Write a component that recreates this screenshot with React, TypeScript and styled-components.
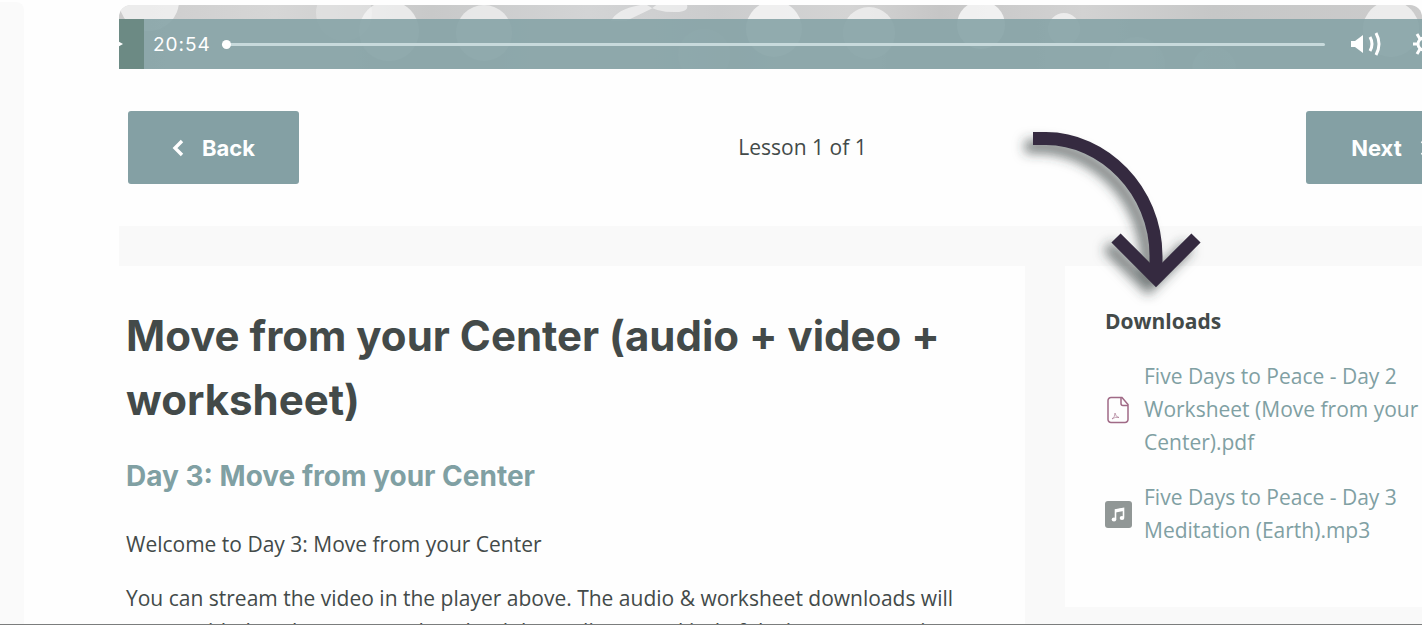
import React from 'react';
import styled, { createGlobalStyle } from 'styled-components';

const Global = createGlobalStyle`
  *, *::before, *::after { box-sizing: border-box; }
  html, body, #root { height: 100%; }
  body {
    margin: 0;
    overflow: hidden;
    background: #fefefe;
    color: #434a49;
    font-family: "Open Sans", "Noto Sans", sans-serif;
    font-size: 21px;
    line-height: 33px;
  }
  h1, h2, h3, p, ul { margin: 0; padding: 0; }
`;

const Page = styled.div`
  position: relative;
  display: flex;
  height: 100%;
  overflow: hidden;
  border-bottom: 1px solid #7b7d7d;
`;

const SideStrip = styled.aside`
  flex: 0 0 24px;
  margin: 2px 95px 0 0;
  background: #fafafa;
  border-top-right-radius: 8px;
`;

const Frame = styled.main`
  flex: 1;
  min-width: 0;
  padding-top: 5px;
`;

const Player = styled.section`
  position: relative;
  height: 64px;
  overflow: hidden;
  border-radius: 12px 12px 0 0;
`;

const Bokeh = styled.svg`
  position: absolute;
  inset: 0;
  width: 100%;
  height: 100%;
`;

const Controls = styled.div`
  position: relative;
  display: flex;
  align-items: center;
  height: 50px;
  margin: 14px -18px 0 -25px;
  background: rgba(134, 163, 166, 0.9);
  color: #fff;
`;

const PlayerButton = styled.button<{ $dark?: boolean }>`
  display: flex;
  align-items: center;
  justify-content: center;
  width: ${p => (p.$dark ? 50 : 32)}px;
  height: 100%;
  padding: 0;
  border: 0;
  background: ${p => (p.$dark ? '#6c8a84' : 'transparent')};
  color: inherit;
`;

const PlayerTools = styled.div`
  display: flex;
  gap: 26px;
  height: 100%;
`;

const Time = styled.time`
  width: 74px;
  padding-left: 9px;
  font-family: Inter, sans-serif;
  font-size: 19px;
  letter-spacing: 1px;
`;

const Seek = styled.input`
  flex: 1;
  min-width: 0;
  height: 20px;
  margin: 0 25px 0 4px;
  appearance: none;
  background: transparent;
  &::-webkit-slider-runnable-track {
    height: 3px;
    border-radius: 2px;
    background: #c8dadc;
  }
  &::-webkit-slider-thumb {
    appearance: none;
    width: 9px;
    height: 9px;
    margin-top: -3px;
    border-radius: 50%;
    background: #fff;
  }
`;

const Pager = styled.nav`
  display: flex;
  align-items: center;
  justify-content: space-between;
  margin-right: -64px;
  padding: 42px 9px;
`;

const PagerButton = styled.button`
  display: flex;
  align-items: center;
  justify-content: center;
  gap: 18px;
  width: 171px;
  height: 73px;
  padding: 0;
  border: 0;
  border-radius: 3px;
  background: #84a0a4;
  color: #fff;
  font: 700 22px/32px Inter, sans-serif;
`;

const Content = styled.div`
  display: flex;
  align-items: flex-start;
  gap: 40px;
  margin-right: -64px;
  padding-top: 40px;
  background: #f9f9f9;
`;

const Lesson = styled.article`
  flex: 1;
  min-width: 0;
  padding: 38px 60px 60px 7px;
  background: #fefefe;
`;

const Title = styled.h1`
  font: 700 42px/64px Inter, sans-serif;
`;

const Subtitle = styled.h2`
  margin-top: 24px;
  color: #80a0a3;
  font: 700 28px/40px Inter, sans-serif;
`;

const Paragraph = styled.p<{ $first?: boolean }>`
  margin-top: ${p => (p.$first ? 32 : 21)}px;
`;

const Downloads = styled.aside`
  flex: 0 0 421px;
  padding: 39px 60px 60px 40px;
  background: #fefefe;
`;

const DownloadsTitle = styled.h3`
  font: 700 21px/33px "Open Sans", sans-serif;
`;

const FileList = styled.ul`
  list-style: none;
`;

const FileItem = styled.li`
  margin-top: 22px;
`;

const FileLink = styled.a`
  display: flex;
  align-items: center;
  gap: 12px;
  color: #80a0a3;
  text-decoration: none;
  white-space: nowrap;
  svg { flex: none; }
`;

const ArrowMark = styled.svg`
  position: absolute;
  top: 110px;
  left: 1000px;
  pointer-events: none;
`;

const bubbles = [
  [30, -4, 30, 0.7], [225, 8, 28, 0.35], [270, 26, 30, 0.65], [365, 28, 28, 0.6], [585, 50, 26, 0.25],
  [655, 24, 28, 0.75], [750, 28, 26, 0.6], [862, 20, 24, 0.8], [945, 24, 16, 0.65],
  [1018, 60, 28, 0.3], [1095, 64, 22, 0.35], [1272, 24, 28, 0.7],
];

const Chevron = ({ back }: { back?: boolean }) => (
  <svg width="12" height="18" viewBox="0 0 12 18" fill="none" stroke="currentColor" strokeWidth="3.4" aria-hidden="true">
    <path d={back ? 'M10 2 3 9l7 7' : 'M2 2l7 7-7 7'} />
  </svg>
);

export default function App() {
  return (
    <>
      <Global />
      <Page>
        <SideStrip />
        <Frame>
          <Player aria-label="Lesson player">
            <Bokeh viewBox="0 0 1303 64" preserveAspectRatio="xMidYMid slice" aria-hidden="true">
              <defs>
                <linearGradient id="haze">
                  <stop offset="0" stopColor="#cccccc" />
                  <stop offset=".12" stopColor="#d6d6d6" />
                  <stop offset=".24" stopColor="#c8c9c9" />
                  <stop offset=".36" stopColor="#d3d4d5" />
                  <stop offset=".46" stopColor="#cbcccd" />
                  <stop offset=".56" stopColor="#d4d4d4" />
                  <stop offset=".63" stopColor="#c6c6c6" />
                  <stop offset=".74" stopColor="#d2d2d2" />
                  <stop offset=".84" stopColor="#c6c7c7" />
                  <stop offset="1" stopColor="#cccccc" />
                </linearGradient>
              </defs>
              <rect width="1303" height="64" fill="url(#haze)" />
              {bubbles.map(([x, y, r, o]) => (
                <circle key={x} cx={x} cy={y} r={r} fill="#fafafa" opacity={o} />
              ))}
              <path d="M492 16Q500 0 540-2L532 4 507 16ZM528 0q10 8 32 7 10-1 8-7Z" fill="#f5f5f5" opacity=".7" />
            </Bokeh>
            <Controls>
              <PlayerButton $dark aria-label="Play">
                <svg width="14" height="14" viewBox="0 0 14 14" fill="currentColor" aria-hidden="true"><path d="M0 1 11 7 0 13Z" /></svg>
              </PlayerButton>
              <Time>20:54</Time>
              <Seek type="range" min="0" max="1254" defaultValue="0" aria-label="Seek" />
              <PlayerTools>
                <PlayerButton aria-label="Volume">
                  <svg width="32" height="26" viewBox="0 0 32 26" fill="none" stroke="currentColor" aria-hidden="true">
                    <path d="M1 10h4l8-6v18l-8-6H1Z" fill="currentColor" stroke="none" />
                    <path d="M20 6q4 7 0 14" strokeWidth="3" />
                    <path d="M26 2q6 11 0 22" strokeWidth="3" />
                  </svg>
                </PlayerButton>
                <PlayerButton aria-label="Settings">
                  <svg width="24" height="24" viewBox="0 0 24 24" fill="none" stroke="currentColor" aria-hidden="true">
                    <circle cx="12" cy="12" r="6" strokeWidth="3" />
                    <path d="M12 1v5M12 18v5M1 12h5M18 12h5M5 2l3 5M16 17l3 5M5 22l3-5M16 7l3-5" strokeWidth="3" />
                  </svg>
                </PlayerButton>
              </PlayerTools>
            </Controls>
          </Player>

          <Pager aria-label="Lessons">
            <PagerButton><Chevron back />Back</PagerButton>
            <span>Lesson 1 of 1</span>
            <PagerButton>Next<Chevron /></PagerButton>
          </Pager>

          <Content>
            <Lesson>
              <Title>Move from your Center (audio + video + worksheet)</Title>
              <Subtitle>Day 3: Move from your Center</Subtitle>
              <Paragraph $first>Welcome to Day 3: Move from your Center</Paragraph>
              <Paragraph>
                You can stream the video in the player above. The audio &amp; worksheet downloads will
                <br />
                are provided so that you can download the audio to any kind of device you are using.
              </Paragraph>
            </Lesson>
            <Downloads>
              <DownloadsTitle>Downloads</DownloadsTitle>
              <FileList>
                <FileItem>
                  <FileLink href="#worksheet">
                    <svg width="27" height="28" viewBox="0 0 27 28" fill="none" stroke="#a06a86" strokeWidth="1.500" aria-hidden="true">
                      <path d="M6 1.500h11l6 7v15a3 3 0 0 1-3 3H6a3 3 0 0 1-3-3v-19a3 3 0 0 1 3-3Z" />
                      <path d="M16 1.500v6a2 2 0 0 0 2 2h5" />
                      <path d="M7 23q3-2 3-6 .5 4 4 4.500-4-1-7 1.500" strokeWidth=".6" />
                    </svg>
                    <span>Five Days to Peace - Day 2<br />Worksheet (Move from your<br />Center).pdf</span>
                  </FileLink>
                </FileItem>
                <FileItem>
                  <FileLink href="#meditation">
                    <svg width="27" height="27" viewBox="0 0 27 27" aria-hidden="true">
                      <rect width="27" height="27" rx="3" fill="#919796" />
                      <path d="M10.500 18V9l8-1.500v9" fill="none" stroke="#fff" strokeWidth="1.600" />
                      <path d="M10.500 8.500l8-1.500v3l-8 1.500Z" fill="#fff" />
                      <ellipse cx="9" cy="18.500" rx="2.300" ry="1.900" fill="#fff" />
                      <ellipse cx="17" cy="17" rx="2.300" ry="1.900" fill="#fff" />
                    </svg>
                    <span>Five Days to Peace - Day 3<br />Meditation (Earth).mp3</span>
                  </FileLink>
                </FileItem>
              </FileList>
            </Downloads>
          </Content>
        </Frame>
        <ArrowMark width="220" height="200" viewBox="0 0 220 200" fill="none" stroke="#352c40" strokeWidth="13" aria-hidden="true">
          <defs>
            <filter id="shade" x="-20%" y="-20%" width="140%" height="140%">
              <feDropShadow dx="-8" dy="8" stdDeviation="6" floodColor="#2f3b38" floodOpacity=".65" />
            </filter>
          </defs>
          <g filter="url(#shade)">
            <path d="M33 28.500H46C103 28.500 156 80 156 146V164" />
            <path d="M116 128l40 40 40-40" />
          </g>
        </ArrowMark>
      </Page>
    </>
  );
}
